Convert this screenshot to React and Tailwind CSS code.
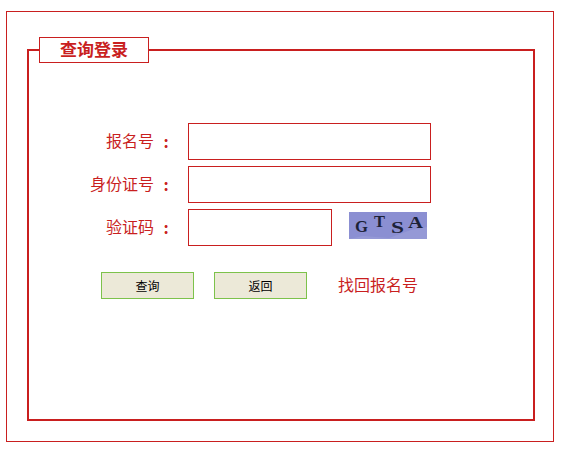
const cjk = "font-['Noto_Sans_CJK_SC',sans-serif]";

function Row({ label, wide, children }) {
  return (
    <div className="flex items-center h-[37px]">
      <label className="w-[94px] pb-[4px] text-right text-[16px] leading-none text-[#c91f1f]">{label}</label>
      <span className="w-[24px] mr-[10px] pb-[2px] text-center text-[16px] leading-none font-bold text-[#c91f1f]">:</span>
      <input
        type="text"
        className={`h-[37px] border border-[#c91f1f] bg-white outline-none ${wide ? 'w-[243px]' : 'w-[144px]'}`}
      />
      {children}
    </div>
  );
}

function Captcha() {
  return (
    <svg width="78" height="27" viewBox="0 0 78 27" className="ml-[17px] mt-[-5px] block">
      <rect width="78" height="27" fill="#8b8fd2" />
      <path d="M0 27 L14 24 L40 26 L62 18 L78 15 L78 27 Z" fill="#9599d6" />
      <g fontFamily="'Liberation Serif', serif" fontWeight="bold" fill="#1c2238" fontSize="16">
        <text x="6" y="20" textLength="13" lengthAdjust="spacingAndGlyphs">G</text>
        <text x="25" y="15" textLength="11" lengthAdjust="spacingAndGlyphs">T</text>
        <text x="42" y="21" fontSize="17" textLength="13" lengthAdjust="spacingAndGlyphs">S</text>
        <text x="59" y="16" textLength="15" lengthAdjust="spacingAndGlyphs">A</text>
      </g>
    </svg>
  );
}

export default function App() {
  return (
    <div className={`bg-white min-h-[451px] pt-[11px] pl-[6px] ${cjk}`}>
      <div className="w-[548px] h-[431px] border border-[#c91f1f] pt-[25px] pl-[20px]">
        <fieldset className="w-[508px] h-[384px] border-2 border-[#c91f1f] m-0 p-0">
          <legend className="ml-[10px] w-[110px] h-[26px] border border-[#c91f1f] bg-white flex justify-center text-[17px] leading-[22px] font-bold text-[#c91f1f]">
            查询登录
          </legend>
          <div className="pt-[60px]">
            <div className="flex flex-col gap-[6px] pl-[31px]">
              <Row label="报名号" wide />
              <Row label="身份证号" wide />
              <Row label="验证码">
                <Captcha />
              </Row>
            </div>
            <div className="flex items-center mt-[26px] pl-[72px]">
              <button className="w-[93px] h-[27px] border border-[#7dc24b] bg-[#ece9d8] text-[12px] text-black">查询</button>
              <button className="ml-[20px] w-[93px] h-[27px] border border-[#7dc24b] bg-[#ece9d8] text-[12px] text-black">返回</button>
              <a className="ml-[31px] pb-[4px] text-[16px] leading-none text-[#c91f1f]">找回报名号</a>
            </div>
          </div>
        </fieldset>
      </div>
    </div>
  );
}
